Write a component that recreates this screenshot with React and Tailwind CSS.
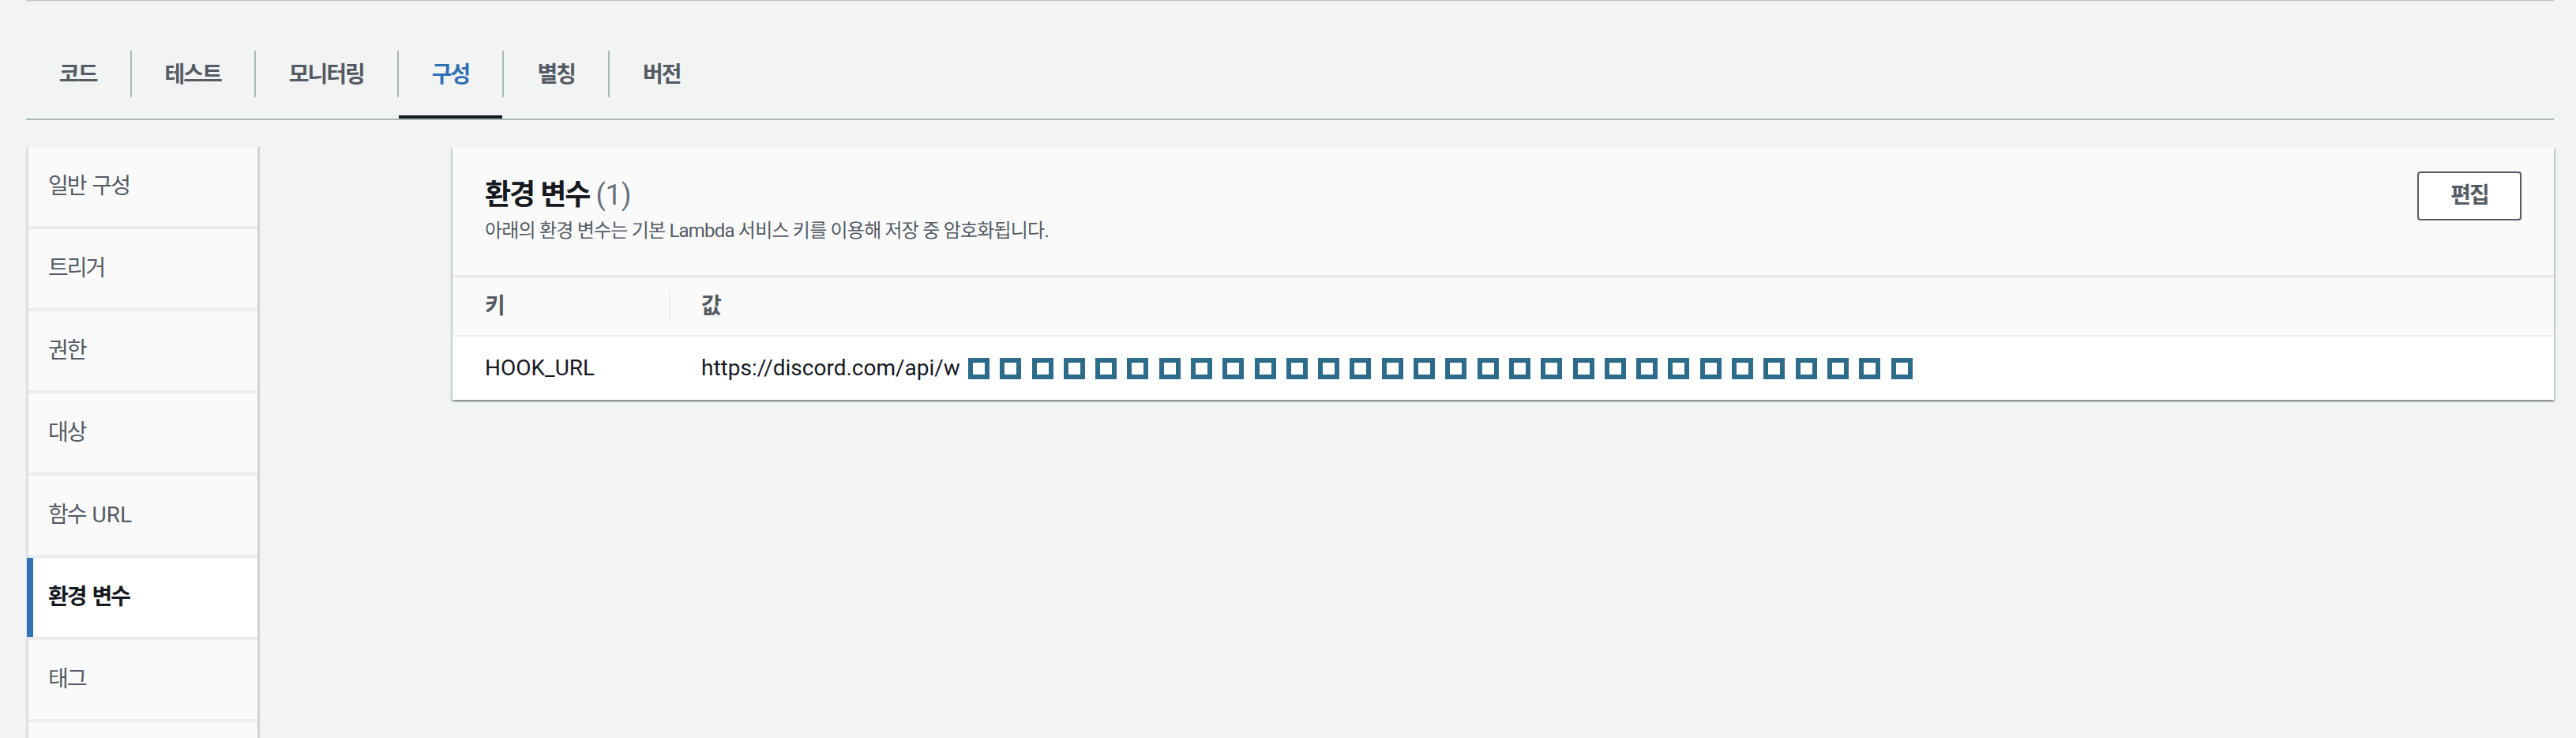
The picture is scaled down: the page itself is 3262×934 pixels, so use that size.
import React from 'react';

const tabs = ['코드', '테스트', '모니터링', '구성', '별칭', '버전'];
const navItems = ['일반 구성', '트리거', '권한', '대상', '함수 URL', '환경 변수', '태그', ''];
const hidden = Array.from({ length: 30 });

// korean words get tighter tracking, latin words keep normal spacing
const Label = ({ text }) =>
    text.split(' ').map((w, i) => (
        <React.Fragment key={i}>
            {i > 0 && <span className="inline-block w-[8px]" />}
            <span className={/[A-Za-z]/.test(w) ? 'tracking-normal' : 'tracking-[-2px]'}>{w}</span>
        </React.Fragment>
    ));

const TabBar = () => (
    <div className="mt-[45px] flex border-b-2 border-[#aab7b8]">
        {tabs.map((t, i) => (
            <React.Fragment key={t}>
                {i > 0 && <div className="mt-[17px] h-[59px] w-[2px] bg-[#aab7b8]" />}
                <div
                    className={`relative h-[103px] px-[42px] pt-[28px] text-[28px] leading-[40px] font-bold tracking-[-2px] ${
                        t === '구성' ? 'text-[#2f6fb5]' : 'text-[#545b64]'
                    }`}
                >
                    {t}
                    {t === '구성' && <div className="absolute bottom-0 left-0 right-0 h-[4px] bg-[#16191f]" />}
                </div>
            </React.Fragment>
        ))}
    </div>
);

const SideNav = () => (
    <div className="w-[296px] shrink-0 self-start flex flex-col gap-[4px] bg-[#eaeded] border-l-[3px] border-r-[3px] border-l-[#e0e2e2] border-r-[#cfd2d3]">
        {navItems.map((n, i) => {
            const active = n === '환경 변수';
            return (
                <div
                    key={i}
                    className={`relative h-[100px] flex items-center pl-[25px] text-[28px] ${
                        active ? 'bg-white font-bold text-[#16191f]' : 'bg-[#fafafa] text-[#545b64]'
                    }`}
                >
                    {active && <div className="absolute left-[-2px] top-0 bottom-0 w-[8px] bg-[#2f72b7]" />}
                    <Label text={n} />
                </div>
            );
        })}
    </div>
);

const EnvCard = () => (
    <div className="ml-[244px] flex-1 self-start bg-white shadow-[0_2px_2px_0_rgba(0,28,36,0.3),2px_2px_2px_0_rgba(0,28,36,0.15),-2px_2px_2px_0_rgba(0,28,36,0.15)]">
        <div className="h-[162px] bg-[#fafafa] flex justify-between items-start px-[41px] pt-[31px]">
            <div className="mt-[5px]">
                <div className="text-[36px] leading-[50px] font-bold text-[#16191f]">
                    <Label text="환경 변수" />
                    <span className="ml-[8px] font-normal text-[#687078]">(1)</span>
                </div>
                <div className="mt-[3px] text-[24px] leading-[34px] tracking-[-0.8px] text-[#545b64]">
                    아래의 환경 변수는 기본 Lambda 서비스 키를 이용해 저장 중 암호화됩니다.
                </div>
            </div>
            <button className="w-[132px] h-[62px] rounded-[4px] border-2 border-[#545b64] bg-white text-[28px] font-bold tracking-[-2px] text-[#545b64]">
                편집
            </button>
        </div>
        <div className="h-[4px] bg-[#eaeded]" />
        <div className="h-[74px] bg-[#fafafa] border-b-2 border-[#eaeded] flex items-center text-[28px] font-bold text-[#545b64]">
            <div className="w-[274px] pl-[41px]">키</div>
            <div className="w-[2px] h-[40px] bg-[#eaeded]" />
            <div className="pl-[39px]">값</div>
        </div>
        <div className="h-[80px] flex items-center text-[28px] text-[#16191f]">
            <div className="w-[274px] pl-[41px]">HOOK_URL</div>
            <div className="pl-[41px] flex items-center">
                <span>https://discord.com/api/w</span>
                <div className="ml-[10px] flex gap-[13.3px]">
                    {hidden.map((_, i) => (
                        <span key={i} className="block w-[27px] h-[27px] border-[6px] border-[#2d6b8b] bg-white" />
                    ))}
                </div>
            </div>
        </div>
    </div>
);

export default function App() {
    return (
        <div className="h-[934px] w-full overflow-hidden bg-[#f2f3f3] font-['Roboto','Noto_Sans_CJK_KR',sans-serif] text-[#16191f]">
            <div className="pl-[33px] pr-[28px]">
                <div className="h-[1px] bg-[#c4c7c9]" />
                <div className="h-[1px] bg-[#e2e4e4]" />
                <TabBar />
                <div className="mt-[34px] flex">
                    <SideNav />
                    <EnvCard />
                </div>
            </div>
        </div>
    );
}
